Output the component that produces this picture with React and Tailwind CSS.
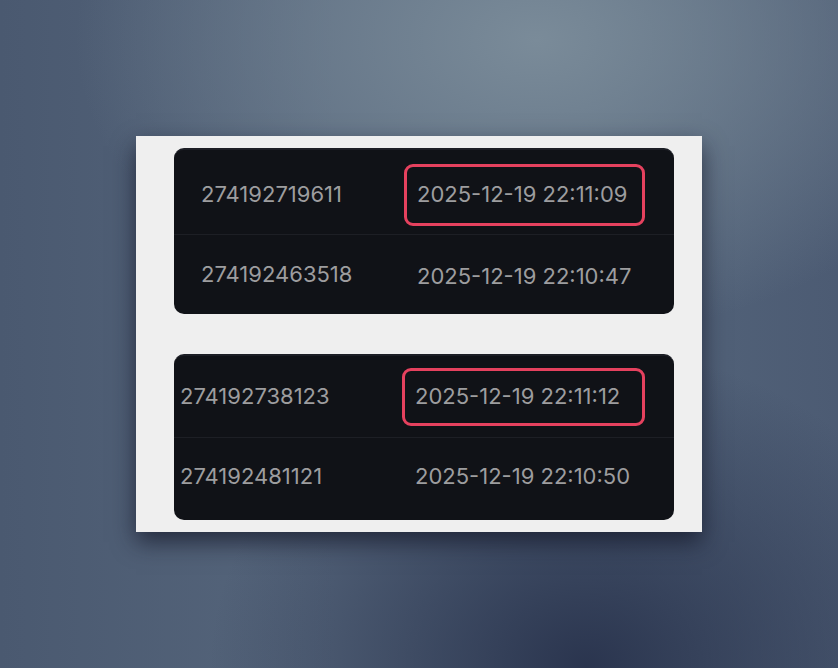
const panels = [
  {
    pad: "pl-[27px]",
    col: "w-[203px]",
    idShift: "mt-[4px]",
    box: "w-[241px] h-[62px] pl-[10px] mt-[5px]",
    heights: ["h-[85px]", "h-[80px] pb-[2px]"],
    rows: [
      ["274192719611", "2025-12-19 22:11:09", true],
      ["274192463518", "2025-12-19 22:10:47", false],
    ],
  },
  {
    pad: "pl-[6px]",
    col: "w-[222px]",
    idShift: "",
    box: "w-[243px] h-[58px] pl-[10px]",
    heights: ["h-[82px]", "h-[82px] pb-[6px]"],
    rows: [
      ["274192738123", "2025-12-19 22:11:12", true],
      ["274192481121", "2025-12-19 22:10:50", false],
    ],
  },
];

function Row({ id, time, hot, p, j }) {
  return (
    <div
      className={`flex items-center ${p.heights[j]} ${p.pad} ${j === 0 ? "border-b border-[#1d1f25]" : ""}`}
    >
      <span className={`${p.col} shrink-0 ${j === 0 ? p.idShift : ""}`}>{id}</span>
      <div
        className={`${p.box} flex items-center rounded-[9px] border-[3px] ${hot ? "border-[#e5415e]" : "border-transparent"}`}
      >
        {time}
      </div>
    </div>
  );
}

export default function App() {
  return (
    <div className="w-full h-screen flex items-center justify-center bg-[radial-gradient(ellipse_55%_45%_at_64%_6%,rgba(122,139,153,1),rgba(122,139,153,0)),radial-gradient(ellipse_45%_48%_at_70%_100%,rgba(40,50,76,0.95),rgba(40,50,76,0)),linear-gradient(90deg,#4a5970_0%,#56667c_40%,#55667c_70%,#4c5b73_100%)]">
      <div className="w-[566px] h-[396px] bg-[#efefef] pt-[12px] pl-[38px] pr-[28px] flex flex-col gap-[40px] shadow-[0_10px_22px_rgba(18,22,38,0.7)]">
        {panels.map((p, i) => (
          <div
            key={i}
            className="h-[166px] rounded-[10px] bg-[#101217] border-t-2 border-[#1c1e25] text-[#9d9d9f] text-[22px] font-['Inter',sans-serif] overflow-hidden"
          >
            {p.rows.map(([id, time, hot], j) => (
              <Row key={id} id={id} time={time} hot={hot} p={p} j={j} />
            ))}
          </div>
        ))}
      </div>
    </div>
  );
}
